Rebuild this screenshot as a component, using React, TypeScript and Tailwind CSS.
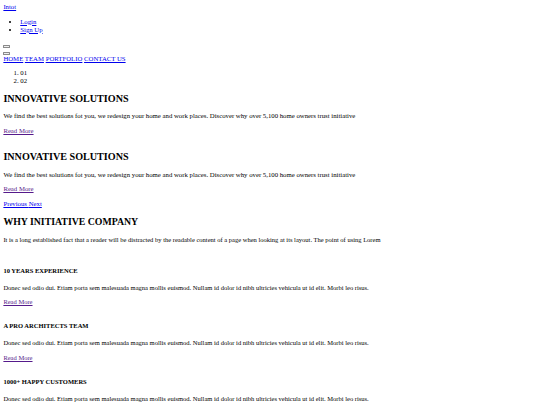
export default function App() {
  const link = 'text-[#0000ee] underline';
  const visited = 'text-[#551a8b] underline';
  const btn =
    'inline-block h-[2.6px] w-[6.75px] border-[0.8px] border-[#8a8a8a] bg-[#efefef] rounded-[0.5px] align-baseline';

  const slides = [1, 2];
  const features = ['10 YEARS EXPERIENCE', 'A PRO ARCHITECTS TEAM', '1000+ HAPPY CUSTOMERS'];
  const lorem =
    'Donec sed odio dui. Etiam porta sem malesuada magna mollis euismod. Nullam id dolor id nibh ultricies vehicula ut id elit. Morbi leo risus.';

  return (
    <div className="min-h-screen bg-white p-[3.375px] font-['Liberation_Serif','Times_New_Roman',serif] text-[6.75px] leading-[8.2px] text-black">
      {/* header */}
      <div>
        <a href="#" className={link}>Intot</a>
      </div>
      <ul className="mt-[6.1px] mb-[6.6px] list-disc pl-[16.875px]">
        <li>
          <a href="#" className={link}><i /> Login</a>
        </li>
        <li>
          <a href="#" className={link}><i /> Sign Up</a>
        </li>
      </ul>
      <div className="leading-[7px]">
        <button type="button" className={btn} />
      </div>
      <div className="leading-[7px]">
        <button type="button" className={btn} />
      </div>
      <div>
        <a href="#" className={link}>HOME</a> <a href="#" className={link}>TEAM</a>{' '}
        <a href="#" className={link}>PORTFOLIO</a> <a href="#" className={link}>CONTACT US</a>
      </div>

      {/* carousel */}
      <ol className="my-[5.8px] list-decimal pl-[16.875px]">
        <li>01</li>
        <li>02</li>
      </ol>
      <div>
        {slides.map((s, i) => (
          <div key={s} className={i > 0 ? 'mt-[16.2px]' : ''}>
            <h2 className="mt-[7.9px] mb-[7.8px] text-[10.125px] leading-[11.6px] font-bold">INNOVATIVE SOLUTIONS</h2>
            <p className="my-[6.3px]">
              We find the best solutions fot you, we redesign your home and work places. Discover why over 5,100 home
              owners trust initiative
            </p>
            <p className="mt-[6.3px]">
              <a href="#" className={visited}>Read More</a>
            </p>
          </div>
        ))}
      </div>
      <div className="mt-[6.4px]">
        <a href="#" className={link}>Previous </a>
        <a href="#" className={link}>Next</a>
      </div>

      {/* about */}
      <div className="text-[6.53px] leading-[7.9px]">
        <h2 className="mt-[8.4px] mb-[8.2px] text-[9.8px] leading-[11.3px] font-bold">WHY INITIATIVE COMPANY</h2>
        <p>
          It is a long established fact that a reader will be distracted by the readable content of a page when looking
          at its layout. The point of using Lorem
        </p>

        <div className="mt-[23.1px]">
          {features.map((f, i) => (
            <div key={f} className={i > 0 ? 'mt-[16.2px]' : ''}>
              <h4 className="mb-[8.8px] text-[6.53px] font-bold">{f}</h4>
              <p>{lorem}</p>
              <p className="mt-[6.9px]">
                <a href="#" className={visited}>Read More</a>
              </p>
            </div>
          ))}
        </div>
      </div>
    </div>
  );
}
